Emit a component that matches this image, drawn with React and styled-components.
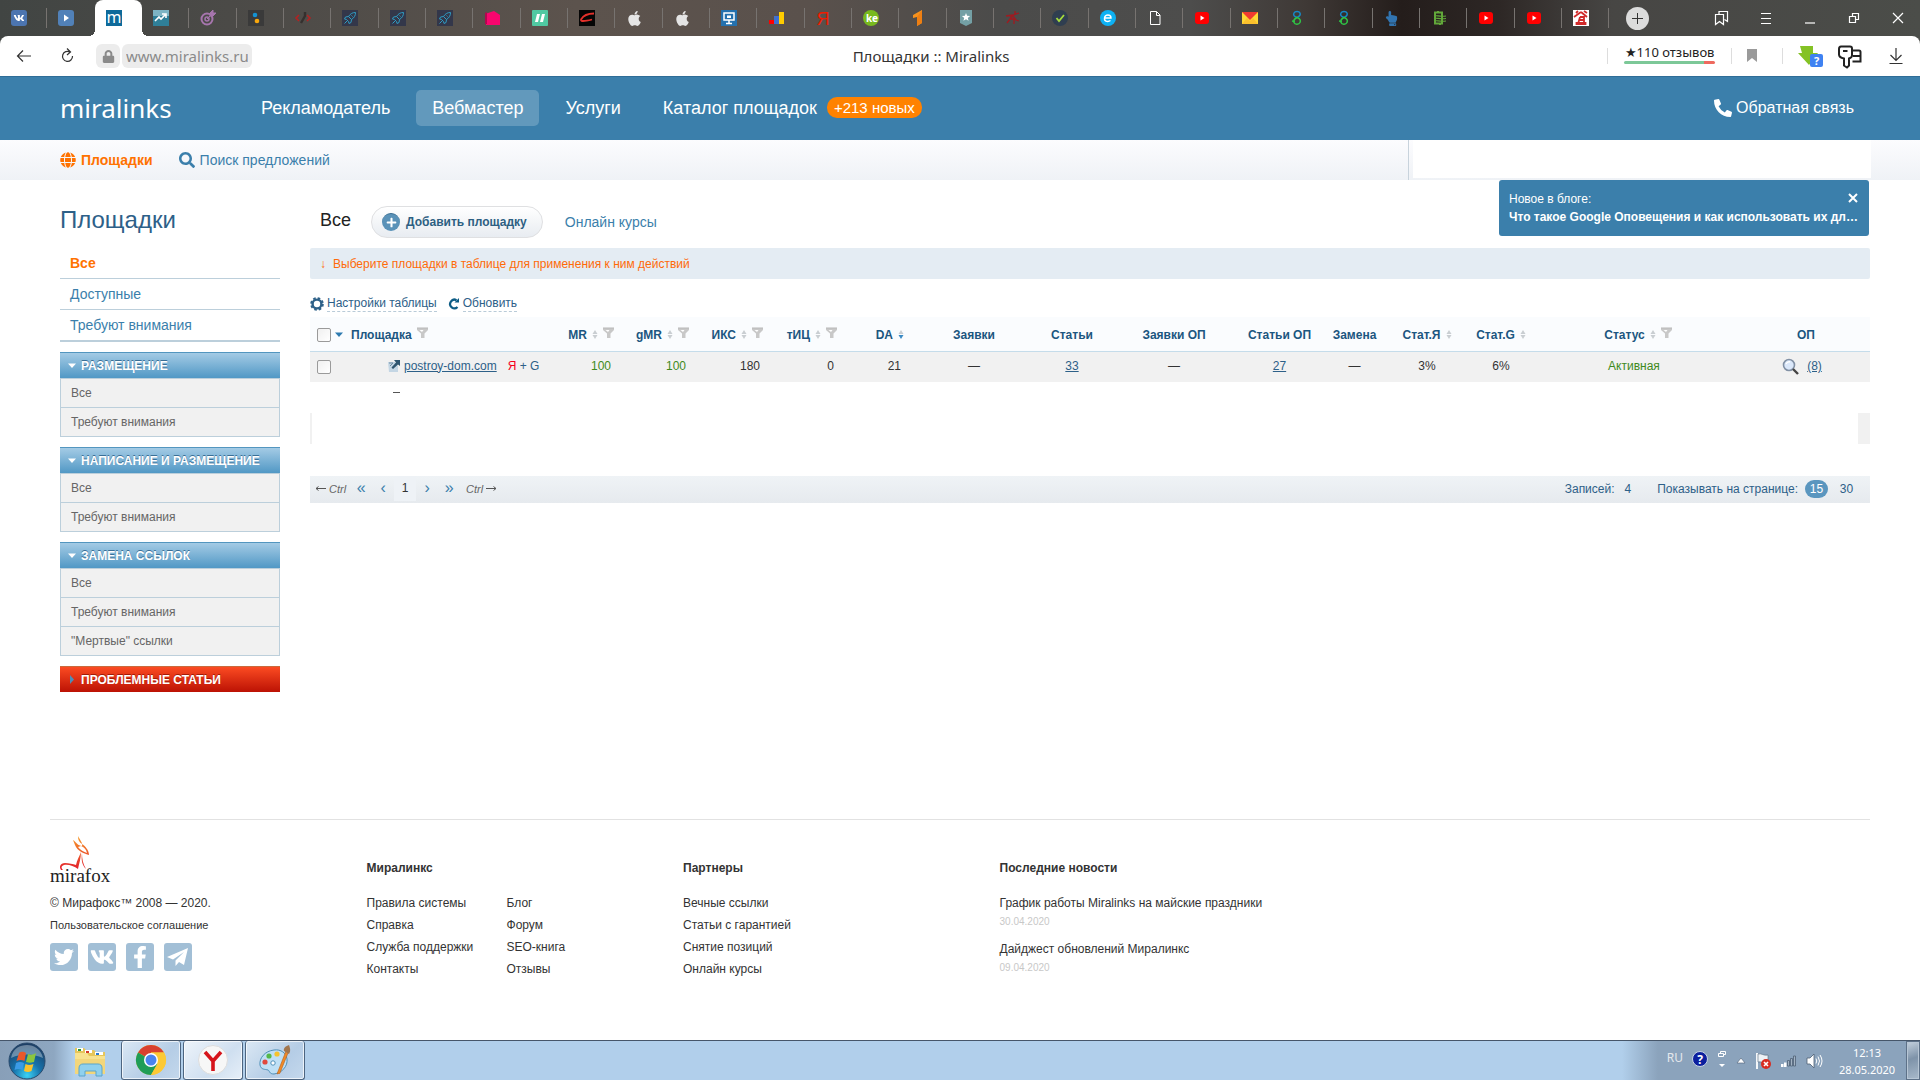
import React, { useState } from 'react';
import styled, { createGlobalStyle, css } from 'styled-components';
import { FaVk, FaApple, FaGlobe, FaSearch, FaPhoneAlt, FaTwitter, FaFacebookF, FaHandPointUp, FaPlus, FaLock, FaFilter } from 'react-icons/fa';

const GlobalStyle = createGlobalStyle`
  * {
    box-sizing: border-box;
  }
  body {
    margin: 0;
    background: #fff;
    color: #333;
    font: 12px/18px "Liberation Sans", Arial, sans-serif;
  }
  a {
    color: inherit;
    text-decoration: none;
  }
  button, input {
    font: inherit;
    color: inherit;
  }
  button {
    border: 0;
    padding: 0;
    background: none;
    cursor: pointer;
  }
  ul {
    list-style: none;
    margin: 0;
    padding: 0;
  }
  svg {
    display: block;
    flex: none;
    overflow: visible;
  }
`;

const Screen = styled.div`
  display: flex;
  flex-direction: column;
  min-height: 100vh;
`;

/* ---------- browser ---------- */

const TabStrip = styled.div`
  display: flex;
  height: 36px;
  background: linear-gradient(90deg, #414543 0, #4b4a47 12%, #5c534d 30%, #5a514c 42%, #4b4b4a 52%, #4d4d4c 62%, #3f3936 68%, #241d1b 73%, #2d2725 78%, #474644 84%, #4b4d49 100%);
`;

const Tabs = styled.div`
  flex: 1;
  display: flex;
  min-width: 0;
`;

const Tab = styled.button`
  position: relative;
  flex: 1;
  min-width: 0;
  display: flex;
  align-items: center;
  padding-left: 11px;

  &::after {
    content: "";
    position: absolute;
    right: 0;
    top: 8px;
    height: 20px;
    border-right: 1px solid #777370;
  }

  ${({ $active }) => $active && css`
    background: #fff;
    border-radius: 8px 8px 0 0;

    &::before, &::after {
      content: "";
      position: absolute;
      top: auto;
      bottom: 0;
      width: 6px;
      height: 6px;
      border: 0;
    }
    &::before {
      left: -6px;
      background: radial-gradient(circle at 0 0, transparent 6px, #fff 6px);
    }
    &::after {
      right: -6px;
      background: radial-gradient(circle at 100% 0, transparent 6px, #fff 6px);
    }
  `}
  ${({ $bare }) => $bare && css`
    &::after {
      display: none;
    }
  `}
`;

const WindowTools = styled.div`
  width: 311px;
  display: flex;
  align-items: center;
  justify-content: space-between;
  padding: 0 14px 0 17px;
  color: #fff;
`;

const WindowButtons = styled.div`
  display: flex;
  align-items: center;
  gap: 28px;
`;

const NewTab = styled.button`
  width: 23px;
  height: 23px;
  border-radius: 50%;
  background: #dcdcdc;
  display: grid;
  place-items: center;
`;

const UrlBar = styled.div`
  height: 40px;
  background: #fff;
  display: grid;
  grid-template-columns: 1fr auto 1fr;
  align-items: center;
  padding: 0 15px;
  color: #333;
  font: 15px/20px "Noto Sans", "Open Sans", sans-serif;
  border-radius: 8px 8px 0 0;
`;

const UrlWrap = styled.div`
  background: linear-gradient(90deg, #414543 50%, #4b4d49 50%);
`;

const UrlLeft = styled.div`
  display: flex;
  align-items: center;
`;

const IconButton = styled.button`
  width: ${({ $w }) => $w || 46}px;
  height: 24px;
  display: flex;
  align-items: center;
`;

const LockBox = styled.span`
  width: 24px;
  height: 24px;
  margin: 0 2px 0 -11px;
  border-radius: 6px;
  background: #ececec;
  color: #8a8a8a;
  display: grid;
  place-items: center;
`;

const Address = styled.input`
  width: 130px;
  height: 24px;
  border: 0;
  border-radius: 6px;
  padding: 0 4px;
  background: #ececec;
  color: #8a8a8a;
  outline: 0;
`;

const PageTitle = styled.span`
  padding-right: 58px;
`;

const UrlRight = styled.div`
  display: flex;
  align-items: center;
  justify-content: flex-end;
`;

const Divider = styled.span`
  height: 16px;
  border-left: 1px solid #ddd;
  margin-right: ${({ $gap }) => $gap}px;
`;

const Reviews = styled.a`
  width: 91px;
  margin: 0 16px 6px 0;
  text-align: center;
  color: #222;
  white-space: nowrap;
  font-size: 13px;
  line-height: 18px;

  &::after {
    content: "";
    display: block;
    height: 3px;
    border-radius: 2px;
    background: linear-gradient(90deg, #7cc898 88%, #ee6a5f 88%);
  }
`;

/* ---------- site header ---------- */

const Header = styled.header`
  display: flex;
  align-items: center;
  height: 64px;
  padding: 0 66px 2px 60px;
  background: #3b7fab;
  border-top: 1px solid #2f6d97;
  color: #fff;
  font-size: 18px;
`;

const Logo = styled.a`
  width: 185px;
  font: 26px/32px "Noto Sans", "Open Sans", sans-serif;
`;

const MainNav = styled.nav`
  flex: 1;
  display: flex;
  align-items: center;
  gap: 10px;
`;

const NavLink = styled.a`
  display: flex;
  align-items: center;
  height: 36px;
  padding: 0 16px;
  border-radius: 5px;
  background: ${({ $active }) => ($active ? '#6299bc' : 'transparent')};
`;

const NewBadge = styled.span`
  margin-left: 10px;
  padding: 0 7px;
  border-radius: 10px;
  background: #ff8200;
  font-size: 15px;
  line-height: 21px;
`;

const Feedback = styled.a`
  display: flex;
  align-items: center;
  gap: 4px;
  font-size: 16px;
`;

const SubHeader = styled.div`
  position: relative;
  display: flex;
  align-items: center;
  height: 40px;
  padding-left: 60px;
  gap: 26px;
  background: linear-gradient(#fcfcfe, #eff2f6);
`;

const SubLink = styled.a`
  display: flex;
  align-items: center;
  gap: 5px;
  font-size: 14px;
  color: ${({ $active }) => ($active ? '#ff7200' : '#3b7fab')};
  font-weight: ${({ $active }) => ($active ? 'bold' : 'normal')};
`;

const AccountBox = styled.div`
  width: 463px;
  height: 40px;
  margin: 0 49px 0 auto;
  padding: 0 0 2px 4px;
  border-left: 1px solid #c8d3dc;

  &::before {
    content: "";
    display: block;
    height: 100%;
    background: #fff;
  }
`;

const BlogNotice = styled.div`
  position: absolute;
  z-index: 2;
  top: 40px;
  right: 51px;
  width: 370px;
  height: 56px;
  padding: 10px;
  border-radius: 3px;
  background: #3b7fab;
  color: #fff;
`;

const NoticeTop = styled.div`
  display: flex;
  justify-content: space-between;
`;

const NoticeLink = styled.a`
  display: block;
  font-weight: bold;
  white-space: nowrap;
`;

/* ---------- page ---------- */

const Page = styled.div`
  flex: 1;
  display: flex;
  align-items: flex-start;
  gap: 30px;
  padding: 26px 50px 40px 60px;
`;

const Sidebar = styled.aside`
  width: 220px;
  flex: none;
`;

const SideTitle = styled.h1`
  margin: 0 0 14px;
  font-size: 24px;
  line-height: 28px;
  font-weight: normal;
  color: #2d6088;
`;

const SideNav = styled.ul`
  margin-bottom: 10px;
  border-bottom: 1px solid #bccfdb;
  font-size: 14px;
  color: #3b7fab;
`;

const SideItem = styled.li`
  height: 31px;
  padding-left: 10px;
  line-height: 30px;
  border-bottom: 1px solid #bccfdb;
  ${({ $active }) => $active && 'color: #ff7200; font-weight: bold;'}
`;

const Group = styled.section`
  margin-bottom: 10px;
`;

const GroupHead = styled.button`
  display: flex;
  align-items: center;
  gap: 5px;
  width: 100%;
  height: 26px;
  padding-left: 8px;
  border-top: 1px solid ${({ $alert }) => ($alert ? '#c96a3c' : '#5396bf')};
  background: ${({ $alert }) => ($alert ? 'linear-gradient(#fb4b22, #bc1204)' : 'linear-gradient(#a4cbe5, #5198c5)')};
  color: #fff;
  font-weight: bold;
  text-transform: uppercase;
  text-shadow: 0 -1px 0 ${({ $alert }) => ($alert ? '#a01a08' : '#3a6f96')};
`;

const GroupList = styled.ul`
  border: 1px solid #bccfdb;
  border-bottom: 0;
  background: #f1f1f1;
  color: #666;
`;

const GroupItem = styled.li`
  height: 29px;
  padding-left: 10px;
  line-height: 28px;
  border-bottom: 1px solid #bccfdb;
`;

const Main = styled.main`
  flex: 1;
  min-width: 0;
`;

const Toolbar = styled.div`
  display: flex;
  align-items: center;
  height: 32px;
  margin-bottom: 10px;
  padding-left: 10px;
`;

const CurrentTab = styled.h2`
  margin: 0 20px 0 0;
  padding-bottom: 4px;
  font-size: 18px;
  line-height: 28px;
  font-weight: normal;
  color: #222;
`;

const AddButton = styled.button`
  display: flex;
  align-items: center;
  gap: 6px;
  height: 32px;
  margin-right: 22px;
  padding: 0 15px 0 10px;
  border: 1px solid #dfe0e2;
  border-radius: 16px;
  background: linear-gradient(#fff, #e8ecf1);
  color: #2d5f82;
  font-weight: bold;
`;

const PlusIcon = styled.span`
  width: 18px;
  height: 18px;
  border-radius: 50%;
  background: #5a92b8;
  border-top: 1px solid #396c90;
  color: #fff;
  display: grid;
  place-items: center;
`;

const CoursesLink = styled.a`
  font-size: 14px;
  color: #3b7fab;
`;

const Hint = styled.div`
  display: flex;
  gap: 7px;
  height: 31px;
  padding-left: 10px;
  line-height: 33px;
  border-radius: 2px;
  background: #e4ecf3;
  color: #ff6a08;
`;

const TableTools = styled.div`
  display: flex;
  align-items: center;
  gap: 11px;
  padding: 16px 0 5px;
`;

const ToolLink = styled.button`
  display: flex;
  align-items: center;
  gap: 3px;
  height: 17px;
  color: #2d6088;

  span {
    line-height: 15px;
    border-bottom: 1px dashed #b9cbd8;
  }
`;

const Table = styled.table`
  width: 100%;
  table-layout: fixed;
  border-collapse: collapse;
  color: #333;
`;

const Th = styled.th`
  height: 34px;
  padding: 2px ${({ $pad }) => $pad || 0}px 0 0;
  background: #fafcfe;
  border-bottom: 1px solid #c5dcea;
  color: #1c5680;
  text-align: ${({ $align }) => $align || 'center'};
  white-space: nowrap;
`;

const ThInner = styled.span`
  display: inline-flex;
  align-items: center;
  gap: 5px;
`;

const Td = styled.td`
  height: 31px;
  padding: 0 ${({ $pad }) => $pad || 0}px 2px 0;
  background: #f1f1f1;
  text-align: ${({ $align }) => $align || 'center'};
  white-space: nowrap;
  color: ${({ $green }) => ($green ? '#3f8a1c' : 'inherit')};
`;

const BlankTd = styled.td`
  height: 31px;
  padding: 0;
`;

const Check = styled.input`
  appearance: none;
  width: 14px;
  height: 14px;
  margin: 0 0 0 7px;
  border: 1px solid #9a9a9a;
  border-radius: 2px;
  background: linear-gradient(135deg, #f0f0f0, #fff);
  vertical-align: middle;
`;

const CheckCell = styled.span`
  display: flex;
  align-items: center;
  gap: 4px;
`;

const SiteCell = styled.span`
  display: flex;
  align-items: center;
  padding-left: 37px;
  gap: 4px;
`;

const CellLink = styled.a`
  color: #2d6088;
  text-decoration: underline;
`;

const Engines = styled.span`
  margin-left: 7px;
  color: #2d6088;

  b {
    color: #f5001d;
    font-weight: normal;
  }
`;

const OffersCell = styled.span`
  display: inline-flex;
  align-items: center;
  gap: 8px;
  vertical-align: middle;
`;

const CutRow = styled.div`
  display: flex;
  justify-content: space-between;
  height: 31px;

  &::before, &::after {
    content: "";
    width: 2px;
    background: #f1f1f1;
  }
  &::after {
    width: 12px;
  }
`;

const LeftOver = styled.span`
  display: block;
  width: 7px;
  margin-left: 83px;
  height: 12px;
  border-top: 1px solid #555;
`;

const Pager = styled.div`
  display: flex;
  align-items: center;
  justify-content: space-between;
  height: 27px;
  margin-top: 1px;
  padding: 0 12px 2px 5px;
  background: linear-gradient(#eff3f6, #e6eaee);
  color: #2d6088;
`;

const Pages = styled.div`
  display: flex;
  align-items: center;
  color: #666;
`;

const PageStep = styled.a`
  width: 22px;
  text-align: center;
  color: #3b7fab;
  font-size: 16px;
  line-height: 20px;
  padding-bottom: 2px;
`;

const PageNow = styled.span`
  width: 22px;
  line-height: 25px;
  text-align: center;
  background: #eef2f6;
  color: #333;
`;

const Key = styled.em`
  display: flex;
  align-items: center;
  gap: 3px;
  font-size: 11px;
  padding: 0 4px 0 ${({ $gap }) => $gap || 0}px;
`;

const PageInfo = styled.div`
  display: flex;
  align-items: center;
  gap: 10px;
`;

const PerPage = styled.a`
  min-width: 23px;
  line-height: 18px;
  border-radius: 9px;
  text-align: center;
  ${({ $active }) => $active && 'background: #5a96bf; color: #fff;'}
`;

const PerPageList = styled.span`
  display: flex;
  align-items: center;
  gap: 7px;
  margin-left: 16px;
`;

/* ---------- footer ---------- */

const Footer = styled.footer`
  display: grid;
  grid-template-columns: repeat(3, 4fr) 11fr;
  margin: 0 50px;
  padding: 15px 0 56px;
  border-top: 1px solid #e2e2e2;
  line-height: 22px;
`;

const FooterColumn = styled.div`
  padding-top: 22px;
`;

const FooterTitle = styled.h3`
  margin: 0 0 13px;
  font-size: 12px;
  line-height: 22px;
`;

const FooterLists = styled.div`
  display: grid;
  grid-template-columns: 140px 1fr;
`;

const Terms = styled.a`
  display: block;
  font-size: 11px;
`;

const Copyright = styled.div`
  margin-top: 8px;
`;

const Socials = styled.div`
  display: flex;
  gap: 10px;
  margin-top: 7px;
`;

const Social = styled.a`
  width: 28px;
  height: 28px;
  border-radius: 3px;
  background: #a2bfd6;
  color: #fff;
  display: grid;
  place-items: center;
`;

const NewsDate = styled.time`
  display: block;
  margin-bottom: 8px;
  font-size: 10px;
  line-height: 16px;
  color: #c8c8c8;
`;

/* ---------- taskbar ---------- */

const Taskbar = styled.div`
  display: flex;
  height: 40px;
  border-top: 1px solid #46566a;
  background: linear-gradient(90deg, #889fb8 0, #8ea7c1 54px, #b1cfeb 74px);
`;

const StartButton = styled.button`
  width: 61px;
  padding-left: 8px;
`;

const TaskButton = styled.button`
  width: ${({ $open }) => ($open ? 60 : 58)}px;
  margin-right: 2px;
  display: grid;
  place-items: center;
  ${({ $open, $bright }) => $open && css`
    border: 1px solid #4d6580;
    border-top: 0;
    border-radius: 3px;
    background: ${$bright ? 'linear-gradient(135deg, #eef4fa, #cfdff0 60%, #e6eff8)' : 'linear-gradient(135deg, #dbe8f4, #b5cde6 60%, #c4d8ec)'};
    box-shadow: inset 0 0 0 1px rgba(255, 255, 255, 0.7);
  `}
`;

const Tray = styled.div`
  display: flex;
  align-items: center;
  margin-left: auto;
  padding-left: 45px;
  background: linear-gradient(90deg, #b1cfeb 0, #8ba3bc 36px);
  color: #fff;
  font: 11px/17px "Noto Sans", "Open Sans", sans-serif;
`;

const TrayIcons = styled.div`
  display: flex;
  align-items: center;
  gap: 9px;
`;

const Language = styled.span`
  font-size: 12px;
  color: #e4e8ec;
  padding-bottom: 6px;
`;

const Clock = styled.div`
  width: 78px;
  margin-left: 6px;
  text-align: center;
`;

const ShowDesktop = styled.button`
  width: 14px;
  height: 39px;
  border: 1px solid #5d7188;
  background: linear-gradient(160deg, #c3d0dd, #7e93a9 45%, #a8b9ca);
  box-shadow: inset 0 0 0 1px #b7c6d5;
`;

/* ---------- icons ---------- */

const Favicon = ({ children, bg, r = 0 }) => (
    <svg width="16" height="16" viewBox="0 0 16 16">
        {bg && <rect width="16" height="16" rx={r} fill={bg} />}
        {children}
    </svg>
);

const glyph = { fontFamily: 'Noto Sans, sans-serif', textAnchor: 'middle' };

const Youtube = () => (
    <Favicon><rect x="1" y="2" width="14" height="12" rx="3" fill="#f00" /><path d="M6.500 5.500v5l4-2.500z" fill="#fff" /></Favicon>
);
const Rocket = () => (
    <Favicon bg="#33374a">
        <path d="M13.500 2.500c-3 0-5 1-7 4L3.500 7l-1 2 2 .5 2 2 .5 2 2-1 .5-3c3-2 4-4 4-7zM9.500 5.500l1 1M5 11l-2.500 2.500M6.500 6.500l3 3" fill="none" stroke="#2e9cc4" strokeWidth="1" />
    </Favicon>
);
const Apple = () => <FaApple size={17} color="#e4e4e4" />;
const Loops = () => (
    <Favicon>
        <path d="M8 7.500C5 6.500 4 5 5 3s5-2.200 6 0-1 3.500-3 4.500" fill="none" stroke="#1688c8" strokeWidth="1.500" />
        <path d="M8 7.500c3 1 4 3 3 5s-5 2.500-6 0 1-4 3-5zM3 11l3 .5" fill="none" stroke="#2fc445" strokeWidth="1.500" />
    </Favicon>
);

const tabIcons = [
    <Favicon bg="#4c75b0" r={3}><FaVk x="2.500" y="2.500" size={11} color="#fff" /></Favicon>,
    <Favicon bg="#5181b8" r={3}><path d="M6 4.500v7l5-3.500z" fill="#fff" /></Favicon>,
    <Favicon bg="#0e6a9a"><text x="8" y="13" fontSize="16" fill="#fff" style={glyph}>m</text></Favicon>,
    <Favicon bg="#2f7f98"><path d="M0 0h16v6H0z" fill="#7db4c4" /><path d="M2 11l4-4 2 2 4-4M9 4h4v4" fill="none" stroke="#fff" strokeWidth="1.600" /></Favicon>,
    <Favicon><circle cx="7" cy="9" r="5.500" fill="none" stroke="#a675ad" strokeWidth="2" /><circle cx="7" cy="9" r="2" fill="none" stroke="#a675ad" strokeWidth="1.500" /><path d="M7 9l5-5M10 3l3-3v3h3l-3 3h-3z" fill="#a675ad" stroke="#a675ad" /></Favicon>,
    <Favicon bg="#3a3a3a"><circle cx="7" cy="5" r="2.300" fill="#1492d2" /><circle cx="9" cy="11" r="2.300" fill="#f9a70c" /></Favicon>,
    <Favicon><path d="M4 5L1 8l3 3M12 5l3 3-3 3" fill="none" stroke="#b32222" strokeWidth="1.600" /><path d="M10 2v4L6 13" fill="none" stroke="#35302e" strokeWidth="2.400" /></Favicon>,
    <Rocket />,
    <Rocket />,
    <Rocket />,
    <Favicon><path d="M1 4l9-3 6 4v10H2z" fill="#f9056e" /><path d="M1 3l2-1v12H1z" fill="#b3074f" /></Favicon>,
    <Favicon bg="#50c9a2" r={1}><path d="M5 4h3l-2 8H3zM10 4h3l-2 8H8z" fill="#fff" /></Favicon>,
    <Favicon bg="#050505"><path d="M15 3.500C9 3.500 4 6 2 9.500c-.5 2 3 2 11 0" fill="none" stroke="#e2302a" strokeWidth="1.800" /></Favicon>,
    <Apple />,
    <Apple />,
    <Favicon bg="#2471ae"><path d="M3 3h10v7H3zM8 10v3M5 13.500h6" fill="none" stroke="#fff" strokeWidth="1.500" /><path d="M6 5.500h4v2.500H6z" fill="#fff" /></Favicon>,
    <Favicon><path d="M1 10h5v4H1z" fill="#f00" /><path d="M6 6h5v8H6z" fill="#3f6fd0" /><path d="M11 2h5v12h-5z" fill="#fc0" /></Favicon>,
    <Favicon><text x="7" y="15" fontSize="18" fill="#ee1c00" style={{ ...glyph, fontFamily: 'Liberation Sans' }}>Я</text></Favicon>,
    <Favicon><circle cx="8" cy="8" r="8" fill="#78b91e" /><text x="9" y="11.500" fontSize="10" fontWeight="bold" fill="#fff" style={glyph}>ke</text></Favicon>,
    <Favicon><path d="M3 5l9-5v13l-5 3V7L3 8z" fill="#f5921e" /><path d="M7 7l5-7v13l-5 3z" fill="#ef7f12" /></Favicon>,
    <Favicon><path d="M2 0h12v13l-6 3-6-3z" fill="#74a0a5" /><path d="M8 3l1.100 2.800 3 .2-2.300 1.900.8 2.900L8 9.200l-2.600 1.600.8-2.900L3.900 6l3-.2z" fill="#fff" /></Favicon>,
    <Favicon><path d="M1 6l7-1 6-2M8 5L5 9l-3 4M8 6l3 4 3 1M5 9l4 0v5M10 1v3" fill="none" stroke="#a01a20" strokeWidth="1.300" /></Favicon>,
    <Favicon><circle cx="8" cy="8" r="8" fill="#2f3e50" /><path d="M4.500 8l2.500 3 5-6" fill="none" stroke="#a5dc3c" strokeWidth="1.800" /></Favicon>,
    <Favicon><circle cx="8" cy="8" r="8" fill="#0db1f3" /><path d="M4.500 8H11c0-4-6-4-6.500 0s4 4 6 2.500" fill="none" stroke="#fff" strokeWidth="1.400" /></Favicon>,
    <Favicon><path d="M3.500 1.500h6l3.500 3.500v9.500h-9.500zM9.500 1.500v4H13" fill="none" stroke="#fff" /></Favicon>,
    <Youtube />,
    <Favicon><path d="M0 2h16v12H0z" fill="#fdd835" /><path d="M0 2h16L8 10z" fill="#f03a30" /><path d="M0 14l5-6 3 3 3-3 5 6z" fill="#fbc02d" /></Favicon>,
    <Loops />,
    <Loops />,
    <FaHandPointUp size={15} color="#3174b0" />,
    <Favicon><path d="M4 2.500h7v11H4zM7 1v1M9 14v1" fill="none" stroke="#62a83a" strokeWidth="2" /><path d="M3 6c3-1 5 1 12 0M3 8.500c3-1 5 1 12 0M3 11c3-1 5 1 12 0" fill="none" stroke="#62a83a" strokeWidth="1.200" /></Favicon>,
    <Youtube />,
    <Youtube />,
    <Favicon bg="#fff"><path d="M8 2l-7 5M8 2l6 5M3 3l2-2M11 1l3 2M7 7h4v7H5l2-7M3.500 15v-2h9v2M6 10h5" fill="none" stroke="#d12a2a" strokeWidth="1.800" /></Favicon>,
];

const Stroke = ({ w = 16, h = 16, d, width = 1.2 }) => (
    <svg width={w} height={h} viewBox={`0 0 ${w} ${h}`}>
        <path d={d} fill="none" stroke="currentColor" strokeWidth={width} />
    </svg>
);

const SortIcon = ({ down }) => (
    <svg width="6" height="9" viewBox="0 0 6 9">
        <path d="M3 0l2.500 4h-5z" fill="#c9ced2" />
        <path d="M3 9L.5 5h5z" fill={down ? '#3b8ac4' : '#c9ced2'} />
    </svg>
);

const FilterIcon = () => (
    <svg width="11" height="16" viewBox="0 0 11 16">
        <path d="M0 1h11v2L7.500 6.500V11H4V6.500L0 3z" fill="#c8c8c8" />
        <path d="M2.500 3h4L5 5z" fill="#fff" />
        <path d="M0 1h11" stroke="#b8b8b8" />
    </svg>
);

const Caret = ({ right, color = '#fff' }) => (
    <svg width="8" height="9" viewBox="0 0 8 9">
        {right ? <path d="M2 0l4 4.500L2 9z" fill={color} /> : <path d="M0 2.500h8L4 7z" fill={color} />}
    </svg>
);

const GearIcon = () => (
    <svg width="14" height="14" viewBox="0 0 14 14">
        <circle cx="7" cy="7" r="4.400" fill="none" stroke="#2d6088" strokeWidth="2.400" />
        <circle cx="7" cy="7" r="5.900" fill="none" stroke="#2d6088" strokeWidth="1.800" strokeDasharray="2.600 2.030" />
    </svg>
);

const RefreshIcon = () => (
    <svg width="12" height="13" viewBox="0 0 12 13">
        <path d="M9.500 10A4.300 4.300 0 1 1 8.500 3.200" fill="none" stroke="#0d5c85" strokeWidth="2.200" />
        <path d="M6.500 5.500H11V1z" fill="#0d5c85" />
    </svg>
);

const ExternalIcon = () => (
    <svg width="12" height="12" viewBox="0 0 12 12">
        <path d="M0 2h7l3 4v6H1z" fill="#c4d6e4" />
        <path d="M6 0h6v6l-2-1.500L5 9 3.500 7.500 8 2.500z" fill="#2f556f" />
        <path d="M1 3h4L2 6" fill="none" stroke="#6d8ba2" />
    </svg>
);

const LoupeIcon = () => (
    <svg width="17" height="17" viewBox="0 0 17 17">
        <circle cx="7" cy="7" r="5.500" fill="#dbe8fa" stroke="#8291a5" strokeWidth="1.600" />
        <path d="M4 6c1-2 3-2.500 4-2" stroke="#fff" strokeWidth="1.400" fill="none" />
        <path d="M11 11l5 5" stroke="#444" strokeWidth="2.400" />
    </svg>
);

const KeyArrow = ({ right }) => (
    <svg width="11" height="7" viewBox="0 0 11 7">
        <path d={right ? 'M0 3.500h10M7.500 1.500l2.500 2-2.500 2' : 'M11 3.500H1M3.500 1.500L1 3.500l2.500 2'} fill="none" stroke="#555" />
    </svg>
);

const FoxLogo = () => (
    <svg width="60" height="49" viewBox="0 0 60 49">
        <defs>
            <linearGradient id="fox" gradientUnits="userSpaceOnUse" x1="0" y1="0" x2="0" y2="34">
                <stop offset="0" stopColor="#f7a02a" />
                <stop offset="1" stopColor="#e3202c" />
            </linearGradient>
        </defs>
        <path d="M28 1c0 4 1 6 4 8 3 2 7 6 7 11-4-1-12-4-14-10l-2-5c3 2 5 6 9 6 1-3-2-6-4-10zM28 12c2 3 6 5 9 6-1-4-3-6-6-7z" fill="url(#fox)" fillRule="evenodd" />
        <path d="M31 17c0 6-2 12-3 17-4-3-10-5-14-4-3 1-3 3-1 5h-2c-2-3-1-7 4-7 4 0 8 1 11 2 1-5 3-8 5-13zM32 18c0 6 1 11 4 16-4-4-5-9-4-16z" fill="url(#fox)" />
        <text x="0" y="47" fontSize="19" fill="#222" fontFamily="Liberation Serif, serif">mirafox</text>
    </svg>
);

const TelegramPlane = () => (
    <svg width="22" height="20" viewBox="0 0 22 20">
        <path d="M21 1L0 10l6 2.500L17 5 8.500 13.500V19l3.500-4 5 3z" fill="#fff" />
    </svg>
);

const StartOrb = () => (
    <svg width="38" height="38" viewBox="0 0 38 38">
        <defs>
            <radialGradient id="orb" cx=".5" cy=".9" r=".85">
                <stop offset="0" stopColor="#3cd2f4" />
                <stop offset=".45" stopColor="#1673ac" />
                <stop offset="1" stopColor="#1c3f66" />
            </radialGradient>
        </defs>
        <circle cx="19" cy="19" r="18" fill="url(#orb)" stroke="#2a4a6c" />
        <path d="M3 16C5 6 12 3 19 3s14 4 16 13c-10-4-20-5-32 0z" fill="#fff" opacity=".35" />
        <path d="M11 11c3-2 5-1 7 0l-1.500 8c-3-1.500-5-1.500-8 0z" fill="#e9582b" />
        <path d="M20 12c3 1 5 1 8-1l-2 9c-3 1-5 1-8 0z" fill="#8cc63e" />
        <path d="M8 21c3-1.500 5-1.500 8 0l-1.500 7c-3-1.500-5-1.500-8 0z" fill="#3b9be6" />
        <path d="M17.500 22c3 1.500 5 1 8 0l-2 7c-3 1.500-5 1-7.500 0z" fill="#fbc22c" />
    </svg>
);

const FolderIcon = () => (
    <svg width="34" height="32" viewBox="0 0 34 32">
        <path d="M2 3h9l2 2h8l2 2h9v22H2z" fill="#e6c65a" />
        <path d="M4 3h6v3H4z" fill="#fff" /><path d="M5 4h3v2H5z" fill="#2a9a3a" />
        <path d="M12 5h7v3h-7z" fill="#fff" /><path d="M13 6h3v2h-3z" fill="#d33a2a" />
        <path d="M22 7h8v3h-8z" fill="#fff" /><path d="M23 8h3v2h-3z" fill="#2a7ad0" />
        <path d="M2 8h12l2 3h16v18H2z" fill="#f7e28f" />
        <path d="M2 14h30v15H2z" fill="#efd272" opacity=".7" />
        <path d="M6 31v-8c0-3 2-4 4-4h15c2 0 4 1 4 4v8h-6v-5H12v5z" fill="#8fd0ee" stroke="#5aa5cc" />
    </svg>
);

const ChromeIcon = () => (
    <svg width="30" height="30" viewBox="0 0 30 30">
        <circle cx="15" cy="15" r="15" fill="#fcc934" />
        <path d="M15 15L2 7.500A15 15 0 0 1 28 7.500H15z" fill="#d8402f" />
        <path d="M15 15L2 7.500A15 15 0 0 0 15 30l6.500-11.300z" fill="#1f9d57" />
        <path d="M15 7.500h13a15 15 0 0 1-13 22.500l6.500-11.300z" fill="#fcc934" />
        <circle cx="15" cy="15" r="7" fill="#fff" />
        <circle cx="15" cy="15" r="5.500" fill="#4a84ee" />
    </svg>
);

const YandexIcon = () => (
    <svg width="30" height="30" viewBox="0 0 30 30">
        <circle cx="15" cy="15" r="14.500" fill="#f7f7f7" stroke="#ddd" />
        <path d="M7 7l8 9 8-9M15 15v11" fill="none" stroke="#d6141b" strokeWidth="3.600" />
    </svg>
);

const PaintIcon = () => (
    <svg width="32" height="32" viewBox="0 0 32 32">
        <path d="M15 6C6 7 0 14 1 21c1 5 5 4 8 5 2 1 1 4 6 4 8-1 14-8 13-15-1-6-6-10-13-9z" fill="#bfe0f5" stroke="#4f90b8" />
        <circle cx="10" cy="12" r="2.600" fill="#55b848" />
        <circle cx="18" cy="10" r="2.600" fill="#f5c32c" />
        <circle cx="6" cy="18" r="2.600" fill="#e0483c" />
        <circle cx="14" cy="19" r="2.200" fill="#fff" stroke="#4f90b8" />
        <path d="M27 7L18 30c1-1 3 0 3-1l8-20z" fill="#f08a28" stroke="#b5601a" strokeWidth=".6" />
        <path d="M25 7c-1-3 2-5 5-6 1 3 2 6 0 9z" fill="#a2764e" />
    </svg>
);

/* ---------- data ---------- */

const columns = [
    { title: 'MR', width: 75, align: 'right', sort: true, filter: true, value: '100', green: true },
    { title: 'gMR', width: 75, align: 'right', sort: true, filter: true, value: '100', green: true },
    { title: 'ИКС', width: 74, align: 'right', sort: true, filter: true, value: '180' },
    { title: 'тИЦ', width: 74, align: 'right', sort: true, filter: true, value: '0' },
    { title: 'DA', width: 67, align: 'right', sort: true, down: true, value: '21' },
    { title: 'Заявки', width: 116, value: '—' },
    { title: 'Статьи', width: 80, value: '33', link: true },
    { title: 'Заявки ОП', width: 124, value: '—' },
    { title: 'Статьи ОП', width: 87, value: '27', link: true },
    { title: 'Замена', width: 63, value: '—' },
    { title: 'Стат.Я', width: 82, sort: true, value: '3%' },
    { title: 'Стат.G', width: 66, sort: true, value: '6%' },
    { title: 'Статус', sort: true, filter: true, value: 'Активная', green: true, pad: 8 },
];

const groups = [
    { title: 'Размещение', items: ['Все', 'Требуют внимания'] },
    { title: 'Написание и размещение', items: ['Все', 'Требуют внимания'] },
    { title: 'Замена ссылок', items: ['Все', 'Требуют внимания', '"Мертвые" ссылки'] },
];

const miralinksLinks = [
    ['Правила системы', 'Справка', 'Служба поддержки', 'Контакты'],
    ['Блог', 'Форум', 'SEO-книга', 'Отзывы'],
];

const partnerLinks = ['Вечные ссылки', 'Статьи с гарантией', 'Снятие позиций', 'Онлайн курсы'];

const news = [
    { title: 'График работы Miralinks на майские праздники', date: '30.04.2020' },
    { title: 'Дайджест обновлений Миралинкс', date: '09.04.2020' },
];

/* ---------- components ---------- */

const Browser = () => (
    <>
        <TabStrip>
            <Tabs>
                {tabIcons.map((icon, index) => (
                    <Tab key={index} $active={index === 2} $bare={index === 1} aria-label={`Вкладка ${index + 1}`}>
                        {icon}
                    </Tab>
                ))}
            </Tabs>
            <WindowTools>
                <NewTab aria-label="Новая вкладка"><svg width="11" height="11" viewBox="0 0 11 11"><path d="M5.500 0v11M0 5.500h11" stroke="#333" /></svg></NewTab>
                <WindowButtons>
                    <button aria-label="Закладки"><Stroke d="M1.500 4.500h8v10l-4-3-4 3zM5 4V1.500h8.500v10l-3-2" /></button>
                    <button aria-label="Меню"><Stroke d="M3 3.500h10M3 8.500h10M3 13.500h10" /></button>
                    <button aria-label="Свернуть"><Stroke d="M3 13h10" /></button>
                    <button aria-label="Развернуть"><Stroke d="M3.500 6.500h6v6h-6zM6.500 6V3.500h6v6H10" /></button>
                    <button aria-label="Закрыть"><Stroke d="M3 3l10 10M13 3L3 13" /></button>
                </WindowButtons>
            </WindowTools>
        </TabStrip>
        <UrlWrap>
            <UrlBar>
                <UrlLeft>
                    <IconButton aria-label="Назад"><Stroke w={17} d="M16 8H3M8 2.500L2.500 8 8 13.500" /></IconButton>
                    <IconButton aria-label="Обновить"><Stroke w={14} d="M9 4A5 5 0 1 0 11.500 8M6 .5l3.500 3.500L6 7" /></IconButton>
                    <LockBox><FaLock size={13} /></LockBox>
                    <Address aria-label="Адрес" defaultValue="www.miralinks.ru" />
                </UrlLeft>
                <PageTitle>Площадки :: Miralinks</PageTitle>
                <UrlRight>
                    <Divider $gap={16} />
                    <Reviews href="#">★110 отзывов</Reviews>
                    <Divider $gap={15} />
                    <svg width="10" height="14" viewBox="0 0 10 14"><path d="M0 0h10v13L5 9l-5 4z" fill="#9a9a9a" /></svg>
                    <svg width="68" height="24" viewBox="0 0 68 24">
                        <path d="M25.500 4v16" stroke="#ddd" />
                        <path d="M43 2h13v7h5l-9 12-11-12h4z" fill="#84c225" />
                        <rect x="53" y="10" width="13" height="13" rx="2" fill="#3f82f2" />
                        <text x="59.500" y="20.500" fontSize="11" fontWeight="bold" fill="#fff" style={glyph}>?</text>
                    </svg>
                    <IconButton $w={48} aria-label="Пароли">
                        <svg width="48" height="24" viewBox="0 0 48 24">
                            <path d="M16 2.500h9q2 0 2 2v7q0 2-3 3v7l-2 2-3-2v-7q-5-1-5-4V5q0-2.500 2-2.500zM18 7h4.500M28 6.500h6q1.500 0 1.500 1.500v9.500h-8M28 12h7" fill="none" stroke="#222" strokeWidth="2" />
                        </svg>
                    </IconButton>
                    <IconButton $w={32} aria-label="Загрузки"><Stroke w={32} h={18} d="M23 1v12M17.500 8l5.500 5.500L28.500 8M16.500 16.500h13" /></IconButton>
                </UrlRight>
            </UrlBar>
        </UrlWrap>
    </>
);

const SiteHeader = () => {
    const [notice, setNotice] = useState(true);

    return (
        <>
            <Header>
                <Logo href="#">miralinks</Logo>
                <MainNav>
                    <NavLink href="#">Рекламодатель</NavLink>
                    <NavLink href="#" $active>Вебмастер</NavLink>
                    <NavLink href="#">Услуги</NavLink>
                    <NavLink href="#">Каталог площадок<NewBadge>+213 новых</NewBadge></NavLink>
                </MainNav>
                <Feedback href="#"><FaPhoneAlt size={18} />Обратная связь</Feedback>
            </Header>
            <SubHeader>
                <SubLink href="#" $active><FaGlobe size={16} />Площадки</SubLink>
                <SubLink href="#"><FaSearch size={16} />Поиск предложений</SubLink>
                <AccountBox />
                {notice && (
                    <BlogNotice>
                        <NoticeTop>
                            Новое в блоге:
                            <button aria-label="Закрыть" onClick={() => setNotice(false)}>
                                <Stroke w={12} h={12} d="M2 1l8 8M10 1L2 9" width={2} />
                            </button>
                        </NoticeTop>
                        <NoticeLink href="#">Что такое Google Оповещения и как использовать их дл…</NoticeLink>
                    </BlogNotice>
                )}
            </SubHeader>
        </>
    );
};

const SideMenu = () => (
    <Sidebar>
        <SideTitle>Площадки</SideTitle>
        <SideNav>
            <SideItem $active><a href="#">Все</a></SideItem>
            <SideItem><a href="#">Доступные</a></SideItem>
            <SideItem><a href="#">Требуют внимания</a></SideItem>
        </SideNav>
        {groups.map((group) => (
            <Group key={group.title}>
                <GroupHead><Caret />{group.title}</GroupHead>
                <GroupList>
                    {group.items.map((item) => (
                        <GroupItem key={item}><a href="#">{item}</a></GroupItem>
                    ))}
                </GroupList>
            </Group>
        ))}
        <GroupHead $alert><Caret right color="#4d8db8" />Проблемные статьи</GroupHead>
    </Sidebar>
);

const SitesTable = () => (
    <Table>
        <colgroup>
            <col width="41" />
            <col width="200" />
            {columns.map((col) => <col key={col.title} width={col.width} />)}
            <col width="128" />
        </colgroup>
        <thead>
            <tr>
                <Th>
                    <CheckCell><Check type="checkbox" aria-label="Выбрать все" /><Caret color="#2d7ab0" /></CheckCell>
                </Th>
                <Th $align="left"><ThInner>Площадка<FilterIcon /></ThInner></Th>
                {columns.map((col) => (
                    <Th key={col.title} $align={col.align} $pad={col.align ? 12 : 0}>
                        <ThInner>
                            {col.title}
                            {col.sort && <SortIcon down={col.down} />}
                            {col.filter && <FilterIcon />}
                        </ThInner>
                    </Th>
                ))}
                <Th>ОП</Th>
            </tr>
        </thead>
        <tbody>
            <tr>
                <Td $align="left"><Check type="checkbox" aria-label="postroy-dom.com" /></Td>
                <Td $align="left">
                    <SiteCell>
                        <ExternalIcon />
                        <CellLink href="#">postroy-dom.com</CellLink>
                        <Engines><b>Я</b> + G</Engines>
                    </SiteCell>
                </Td>
                {columns.map((col) => (
                    <Td key={col.title} $align={col.align} $green={col.green} $pad={col.align ? 15 : col.pad}>
                        {col.link ? <CellLink href="#">{col.value}</CellLink> : col.value}
                    </Td>
                ))}
                <Td $pad={8}><OffersCell><LoupeIcon /><CellLink href="#">(8)</CellLink></OffersCell></Td>
            </tr>
            <tr><BlankTd colSpan={16}><LeftOver /></BlankTd></tr>
            <tr><BlankTd colSpan={16}><CutRow /></BlankTd></tr>
            <tr><BlankTd colSpan={16} /></tr>
        </tbody>
    </Table>
);

const Content = () => (
    <Main>
        <Toolbar>
            <CurrentTab>Все</CurrentTab>
            <AddButton><PlusIcon><FaPlus size={11} /></PlusIcon>Добавить площадку</AddButton>
            <CoursesLink href="#">Онлайн курсы</CoursesLink>
        </Toolbar>
        <Hint><span>↓</span>Выберите площадки в таблице для применения к ним действий</Hint>
        <TableTools>
            <ToolLink><GearIcon /><span>Настройки таблицы</span></ToolLink>
            <ToolLink><RefreshIcon /><span>Обновить</span></ToolLink>
        </TableTools>
        <SitesTable />
        <Pager>
            <Pages>
                <Key><KeyArrow />Ctrl</Key>
                <PageStep href="#">«</PageStep>
                <PageStep href="#">‹</PageStep>
                <PageNow>1</PageNow>
                <PageStep href="#">›</PageStep>
                <PageStep href="#">»</PageStep>
                <Key $gap={6}>Ctrl<KeyArrow right /></Key>
            </Pages>
            <PageInfo>
                <span>Записей:</span>
                <span>4</span>
                <PerPageList>
                    Показывать на странице:
                    <PerPage href="#" $active>15</PerPage>
                    <PerPage href="#">30</PerPage>
                </PerPageList>
            </PageInfo>
        </Pager>
    </Main>
);

const LinkList = ({ links }) => (
    <ul>
        {links.map((link) => <li key={link}><a href="#">{link}</a></li>)}
    </ul>
);

const SiteFooter = () => (
    <Footer>
        <div>
            <FoxLogo />
            <Copyright>© Мирафокс™ 2008 — 2020.</Copyright>
            <Terms href="#">Пользовательское соглашение</Terms>
            <Socials>
                <Social href="#" aria-label="Twitter"><FaTwitter size={20} /></Social>
                <Social href="#" aria-label="VK"><FaVk size={24} /></Social>
                <Social href="#" aria-label="Facebook"><FaFacebookF size={22} /></Social>
                <Social href="#" aria-label="Telegram"><TelegramPlane /></Social>
            </Socials>
        </div>
        <FooterColumn>
            <FooterTitle>Миралинкс</FooterTitle>
            <FooterLists>
                {miralinksLinks.map((links) => <LinkList key={links[0]} links={links} />)}
            </FooterLists>
        </FooterColumn>
        <FooterColumn>
            <FooterTitle>Партнеры</FooterTitle>
            <LinkList links={partnerLinks} />
        </FooterColumn>
        <FooterColumn>
            <FooterTitle>Последние новости</FooterTitle>
            {news.map((item) => (
                <div key={item.date}>
                    <a href="#">{item.title}</a>
                    <NewsDate>{item.date}</NewsDate>
                </div>
            ))}
        </FooterColumn>
    </Footer>
);

const WindowsTaskbar = () => (
    <Taskbar>
        <StartButton aria-label="Пуск"><StartOrb /></StartButton>
        <TaskButton aria-label="Проводник"><FolderIcon /></TaskButton>
        <TaskButton $open aria-label="Chrome"><ChromeIcon /></TaskButton>
        <TaskButton $open $bright aria-label="Yandex"><YandexIcon /></TaskButton>
        <TaskButton $open aria-label="Paint"><PaintIcon /></TaskButton>
        <Tray>
            <TrayIcons>
                <Language>RU</Language>
                <svg width="16" height="24" viewBox="0 0 16 24">
                    <circle cx="8" cy="10" r="7.500" fill="#0c1f9e" stroke="#c8d4e4" />
                    <text x="8" y="14.500" fontSize="12" fontWeight="bold" fill="#fff" style={glyph}>?</text>
                </svg>
                <svg width="10" height="24" viewBox="0 0 10 24">
                    <path d="M1.500 4.500h5v3h-5zM3.500 4V2.500h5v3H7" fill="none" stroke="#fff" />
                    <path d="M2 15h6l-3 3z" fill="#fff" />
                </svg>
                <svg width="10" height="8" viewBox="0 0 10 8"><path d="M5 1l4 5H1z" fill="#fff" stroke="#4e6075" strokeWidth=".6" /></svg>
                <svg width="17" height="18" viewBox="0 0 17 18">
                    <path d="M2 1v16" stroke="#fff" strokeWidth="1.800" />
                    <path d="M3 2c4-1 5 2 10 1v8c-5 1-6-2-10-1z" fill="#eef2f6" stroke="#56687c" strokeWidth=".6" />
                    <circle cx="11" cy="12" r="5" fill="#d82b20" />
                    <path d="M9 10l4 4M13 10l-4 4" stroke="#fff" strokeWidth="1.600" />
                </svg>
                <svg width="16" height="12" viewBox="0 0 16 12">
                    <path d="M0 9h2.500v3H0zM3 7.500h2.500V12H3z" fill="#fff" />
                    <path d="M6.500 5.500h2V11h-2zM9.500 3.500h2V11h-2zM12.500 1h2v10h-2z" fill="#a3b3c3" stroke="#4e6075" strokeWidth=".8" />
                </svg>
                <svg width="16" height="16" viewBox="0 0 16 16">
                    <path d="M1 5h3l4-4v14l-4-4H1z" fill="#fff" stroke="#4e6075" strokeWidth=".8" />
                    <path d="M10 5.500q1.500 2.500 0 5M12 3.500q3 4.500 0 9M14 2q4 6 0 12" fill="none" stroke="#fff" />
                </svg>
            </TrayIcons>
            <Clock>12:13<br />28.05.2020</Clock>
            <ShowDesktop aria-label="Свернуть все окна" />
        </Tray>
    </Taskbar>
);

const App = () => (
    <Screen>
        <GlobalStyle />
        <Browser />
        <SiteHeader />
        <Page>
            <SideMenu />
            <Content />
        </Page>
        <SiteFooter />
        <WindowsTaskbar />
    </Screen>
);

export default App;
